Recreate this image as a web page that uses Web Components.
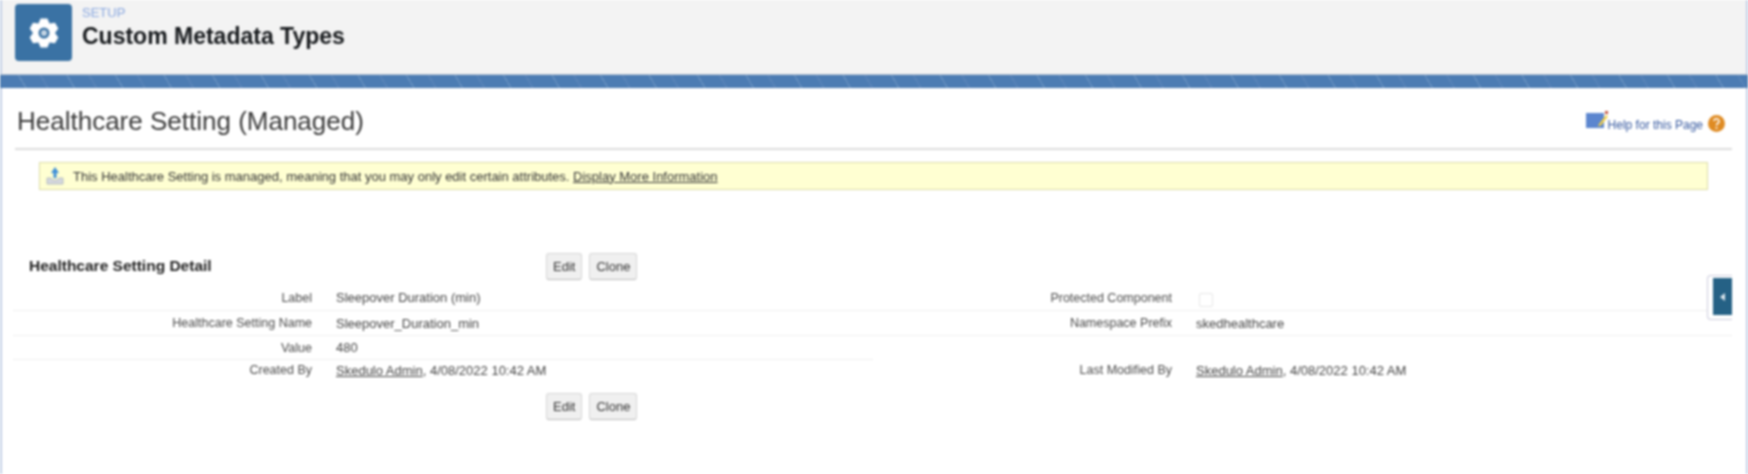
<!DOCTYPE html>
<html>
<head>
<meta charset="utf-8">
<style>
  html, body { margin: 0; height: 474px; overflow: hidden; background: #fff; }
  body { font-family: "Liberation Sans", Arial, sans-serif; color: #333; }
  setup-page { filter: blur(1.100px); }
</style>
</head>
<body>
<setup-page>
  <setup-header slot="header" eyebrow="SETUP" heading="Custom Metadata Types"></setup-header>
  <page-title heading="Healthcare Setting (Managed)"></page-title>
  <info-message>This Healthcare Setting is managed, meaning that you may only edit certain attributes. <a>Display More Information</a></info-message>
  <detail-block heading="Healthcare Setting Detail">
    <detail-row style="height:26px" label="Label" value="Sleepover Duration (min)" label2="Protected Component" check></detail-row>
    <detail-row style="height:25px" label="Healthcare Setting Name" value="Sleepover_Duration_min" label2="Namespace Prefix" value2="skedhealthcare"></detail-row>
    <detail-row style="height:24px" label="Value" value="480" short></detail-row>
    <detail-row style="height:20px" label="Created By" link="Skedulo Admin" value=", 4/08/2022 10:42 AM" label2="Last Modified By" link2="Skedulo Admin" value2=", 4/08/2022 10:42 AM" last></detail-row>
  </detail-block>
  <side-tab></side-tab>
</setup-page>

<script>
class SetupPage extends HTMLElement {
  constructor() {
    super();
    this.attachShadow({ mode: "open" });
    this.shadowRoot.innerHTML = `
      <style>
        :host { display: flex; flex-direction: column; height: 474px; box-sizing: border-box; position: relative;
                border-left: 2px solid #c3d0e6; border-right: 2px solid #c3d0e6; }
        .band { height: 13px; margin: 0 -2px; border-top: 1px solid #b9c4d2; flex: none;
                background: repeating-linear-gradient(60deg, #4c7cb3 0 22px, #6f97c4 22px 23px, #4c7cb3 23px 41px, #6089bb 41px 42px); }
        .panel { flex: 1; background: #fff; }
      </style>
      <slot name="header"></slot>
      <div class="band"></div>
      <div class="panel"><slot></slot></div>
    `;
  }
}

class SetupHeader extends HTMLElement {
  constructor() {
    super();
    this.attachShadow({ mode: "open" });
    // six tooth gear, first tooth straight up
    let pts = [];
    for (let i = 0; i < 6; i++) {
      [[-13, 15], [13, 15], [30, 11]].forEach(([off, r]) => {
        const a = (i * 60 + off - 90) * Math.PI / 180;
        pts.push((16 + r * Math.cos(a)).toFixed(1) + " " + (16 + r * Math.sin(a)).toFixed(1));
      });
    }
    this.shadowRoot.innerHTML = `
      <style>
        :host { display: flex; height: 74px; box-sizing: border-box; background: #f3f3f3; padding: 4px 0 0 13px; gap: 10px; }
        .icon { width: 57px; height: 57px; background: #3a72a4; border-radius: 4px; display: flex; align-items: center; justify-content: center; }
        .eyebrow { font-size: 13px; line-height: 14px; color: #8aa8e0; margin-top: 2px; }
        .title { font-size: 23px; line-height: 24px; font-weight: bold; color: #16191c; margin-top: 4px; }
      </style>
      <div class="icon">
        <svg width="32" height="32" viewBox="0 0 32 32">
          <path fill="#fff" fill-rule="evenodd" d="M${pts.join("L")}Z M16 10.500a5.500 5.500 0 1 0 0 11 5.500 5.500 0 0 0 0-11z"/>
          <circle cx="16" cy="16" r="3" fill="#fff" opacity=".7"/>
        </svg>
      </div>
      <div>
        <div class="eyebrow">${this.getAttribute("eyebrow")}</div>
        <div class="title">${this.getAttribute("heading")}</div>
      </div>
    `;
  }
}

class PageTitle extends HTMLElement {
  constructor() {
    super();
    this.attachShadow({ mode: "open" });
    this.shadowRoot.innerHTML = `
      <style>
        :host { display: flex; justify-content: space-between; height: 62px; box-sizing: border-box;
                margin: 0 14px 0 13px; border-bottom: 2px solid #dcdcdc; padding: 18px 0 0 2px; }
        h1 { margin: 0; font-size: 26px; line-height: 30px; font-weight: normal; color: #3a3a3a; }
        .help { display: flex; align-items: flex-start; font-size: 12px; color: #35589f; padding-right: 6px; margin-top: 3px; }
        .help span { margin: 9px 4px 0 0; }
        .pic { margin-top: 2px; margin-right: -1px; }
      </style>
      <h1>${this.getAttribute("heading")}</h1>
      <div class="help">
        <svg class="pic" width="24" height="19" viewBox="0 0 24 19">
          <rect x="1" y="2" width="18" height="15" fill="#5c86cf"/>
          <path d="M14 13l7-9 2 1.500-7 9-3 1z" fill="#f2cf4a"/>
          <rect x="20" y="0" width="3" height="3" fill="#c6553f"/>
        </svg>
        <span>Help for this Page</span>
        <svg width="19" height="19" viewBox="0 0 19 19" style="margin-top:5px">
          <circle cx="9.500" cy="9.500" r="8.500" fill="#df8b23"/>
          <path d="M7 7a2.500 2.500 0 1 1 3.500 2.500c-.8.4-1 1-1 2" fill="none" stroke="#fff" stroke-width="1.500"/>
          <circle cx="9.500" cy="14" r="1" fill="#fff"/>
        </svg>
      </div>
    `;
  }
}

class InfoMessage extends HTMLElement {
  constructor() {
    super();
    this.attachShadow({ mode: "open" });
    this.shadowRoot.innerHTML = `
      <style>
        :host { display: flex; align-items: center; gap: 9px; height: 28px; box-sizing: border-box; margin: 12px 38px 0 37px;
                padding-left: 6px; background: #ffffd2; border: 1px solid #dcdca8; font-size: 13px; color: #333; }
        ::slotted(a) { color: #333; text-decoration: underline; }
      </style>
      <svg width="18" height="20" viewBox="0 0 18 20">
        <path d="M9 1l4 6h-2.500v5h-3V7H5z" fill="#3f8fd8"/>
        <path d="M1 12h4l1.500 2h5L13 12h4v6H1z" fill="#d5d8de" stroke="#aab1bd" stroke-width=".8"/>
      </svg>
      <span><slot></slot></span>
    `;
  }
}

class DetailBlock extends HTMLElement {
  constructor() {
    super();
    this.attachShadow({ mode: "open" });
    this.shadowRoot.innerHTML = `
      <style>
        :host { display: block; margin: 62px 14px 0 11px; }
        .buttons { display: grid; grid-template-columns: 533px auto 1fr; align-items: center; height: 28px; }
        .title { font-size: 15.500px; font-weight: bold; color: #222; padding-left: 16px; }
        .btns { display: flex; gap: 7px; }
        .btn { box-sizing: border-box; height: 27px; padding: 0 6px; display: flex; align-items: center; font-size: 13px; color: #333;
               background: #f0f0f0; border: 1px solid #d6d6d6; border-bottom-color: #bbb; border-radius: 3px; }
        .rows { margin: 5px 0 12px; }
      </style>
      <div class="buttons">
        <div class="title">${this.getAttribute("heading")}</div>
        <div class="btns"><div class="btn">Edit</div><div class="btn">Clone</div></div>
      </div>
      <div class="rows"><slot></slot></div>
      <div class="buttons">
        <div></div>
        <div class="btns"><div class="btn">Edit</div><div class="btn">Clone</div></div>
      </div>
    `;
  }
}

class DetailRow extends HTMLElement {
  constructor() {
    super();
    this.attachShadow({ mode: "open" });
    const cell = (link, value) => (link ? `<u>${link}</u>` : "") + (value || "");
    const check = this.hasAttribute("check") ? `<span class="box"></span>` : "";
    const line = this.hasAttribute("last") ? "none" : "1px solid #efefef";
    const rightLine = this.hasAttribute("short") ? "none" : line;
    this.shadowRoot.innerHTML = `
      <style>
        :host { display: grid; grid-template-columns: 299px 561px 299px 1fr; font-size: 13px; color: #444; }
        div { display: flex; align-items: center; min-width: 0; white-space: nowrap; box-sizing: border-box; }
        .l { justify-content: flex-end; font-size: 12.500px; color: #4a4a4a; }
        .v { padding-left: 24px; }
        .a { border-bottom: ${line}; }
        .b { border-bottom: ${rightLine}; }
        .box { width: 14px; height: 14px; border: 1px solid #e6e6e6; border-radius: 2px; box-sizing: border-box; margin: 5px 0 0 3px; }
      </style>
      <div class="l a">${this.getAttribute("label") || ""}</div>
      <div class="v a">${cell(this.getAttribute("link"), this.getAttribute("value"))}</div>
      <div class="l b">${this.getAttribute("label2") || ""}</div>
      <div class="v b">${check}${cell(this.getAttribute("link2"), this.getAttribute("value2"))}</div>
    `;
  }
}

class SideTab extends HTMLElement {
  constructor() {
    super();
    this.attachShadow({ mode: "open" });
    this.shadowRoot.innerHTML = `
      <style>
        :host { position: absolute; top: 275px; right: 14px; width: 25px; height: 45px; box-sizing: border-box;
                border: 1px solid #ccd; border-right: none; border-radius: 4px 0 0 4px; padding: 2px 0 4px 5px; display: flex; background: #fff; }
        .fill { flex: 1; background: #256185; display: flex; align-items: center; justify-content: center; }
        .fill i { border: 4px solid transparent; border-right: 5px solid #dfe8ee; border-left: none; }
      </style>
      <div class="fill"><i></i></div>
    `;
  }
}

customElements.define("setup-page", SetupPage);
customElements.define("setup-header", SetupHeader);
customElements.define("page-title", PageTitle);
customElements.define("info-message", InfoMessage);
customElements.define("detail-block", DetailBlock);
customElements.define("detail-row", DetailRow);
customElements.define("side-tab", SideTab);
</script>
</body>
</html>
